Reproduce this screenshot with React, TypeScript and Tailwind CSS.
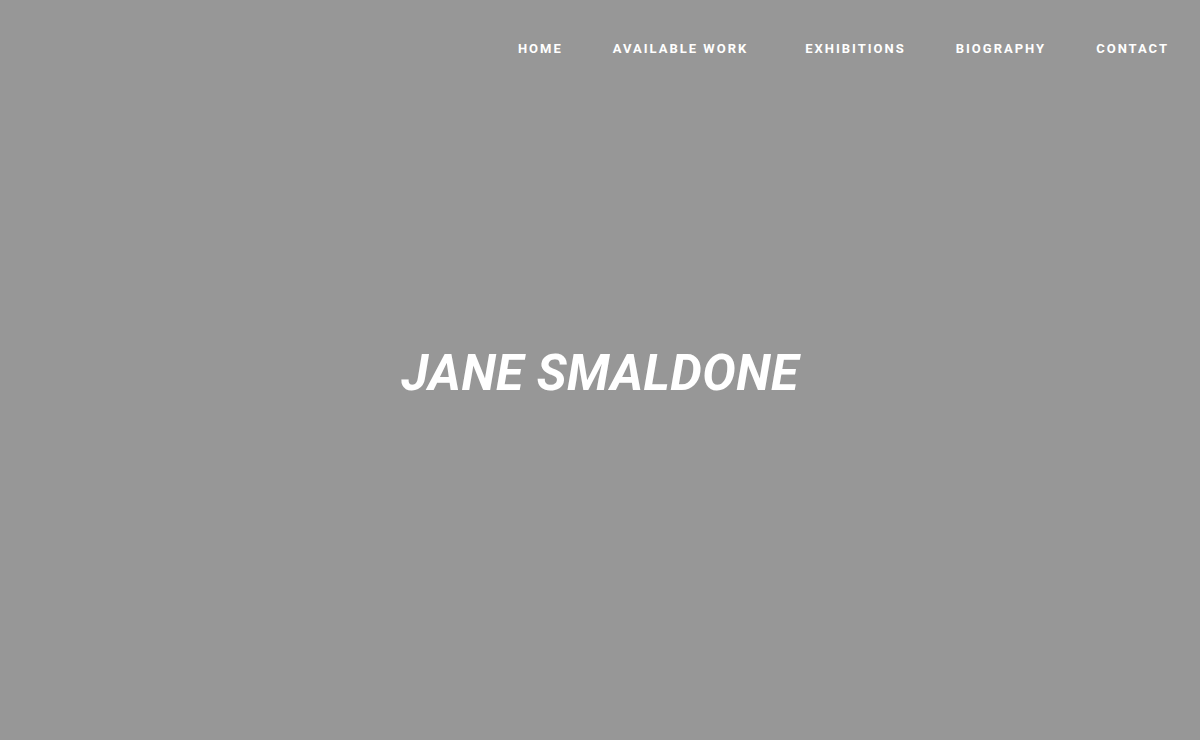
import React from 'react';

const navItems = ['Home', 'Available Work', 'Exhibitions', 'Biography', 'Contact'];

export default function App() {
  return (
    <div className="flex h-[740px] w-full flex-col bg-[#979797] font-['Roboto',sans-serif] text-white">
      <header className="flex justify-end pr-[31px] pt-[41px]">
        <nav className="flex items-center gap-[50px]">
          {navItems.map((item) => (
            <a
              key={item}
              href="#"
              className={`text-[13px] font-bold uppercase leading-[16px] tracking-[2px] ${item === 'Available Work' ? 'mr-[7px]' : ''}`}
            >
              {item}
            </a>
          ))}
        </nav>
      </header>
      <main className="flex flex-1 items-start justify-center pt-[291px]">
        <h1 className="text-[50px] font-bold italic leading-none tracking-[0.5px]">JANE SMALDONE</h1>
      </main>
    </div>
  );
}
